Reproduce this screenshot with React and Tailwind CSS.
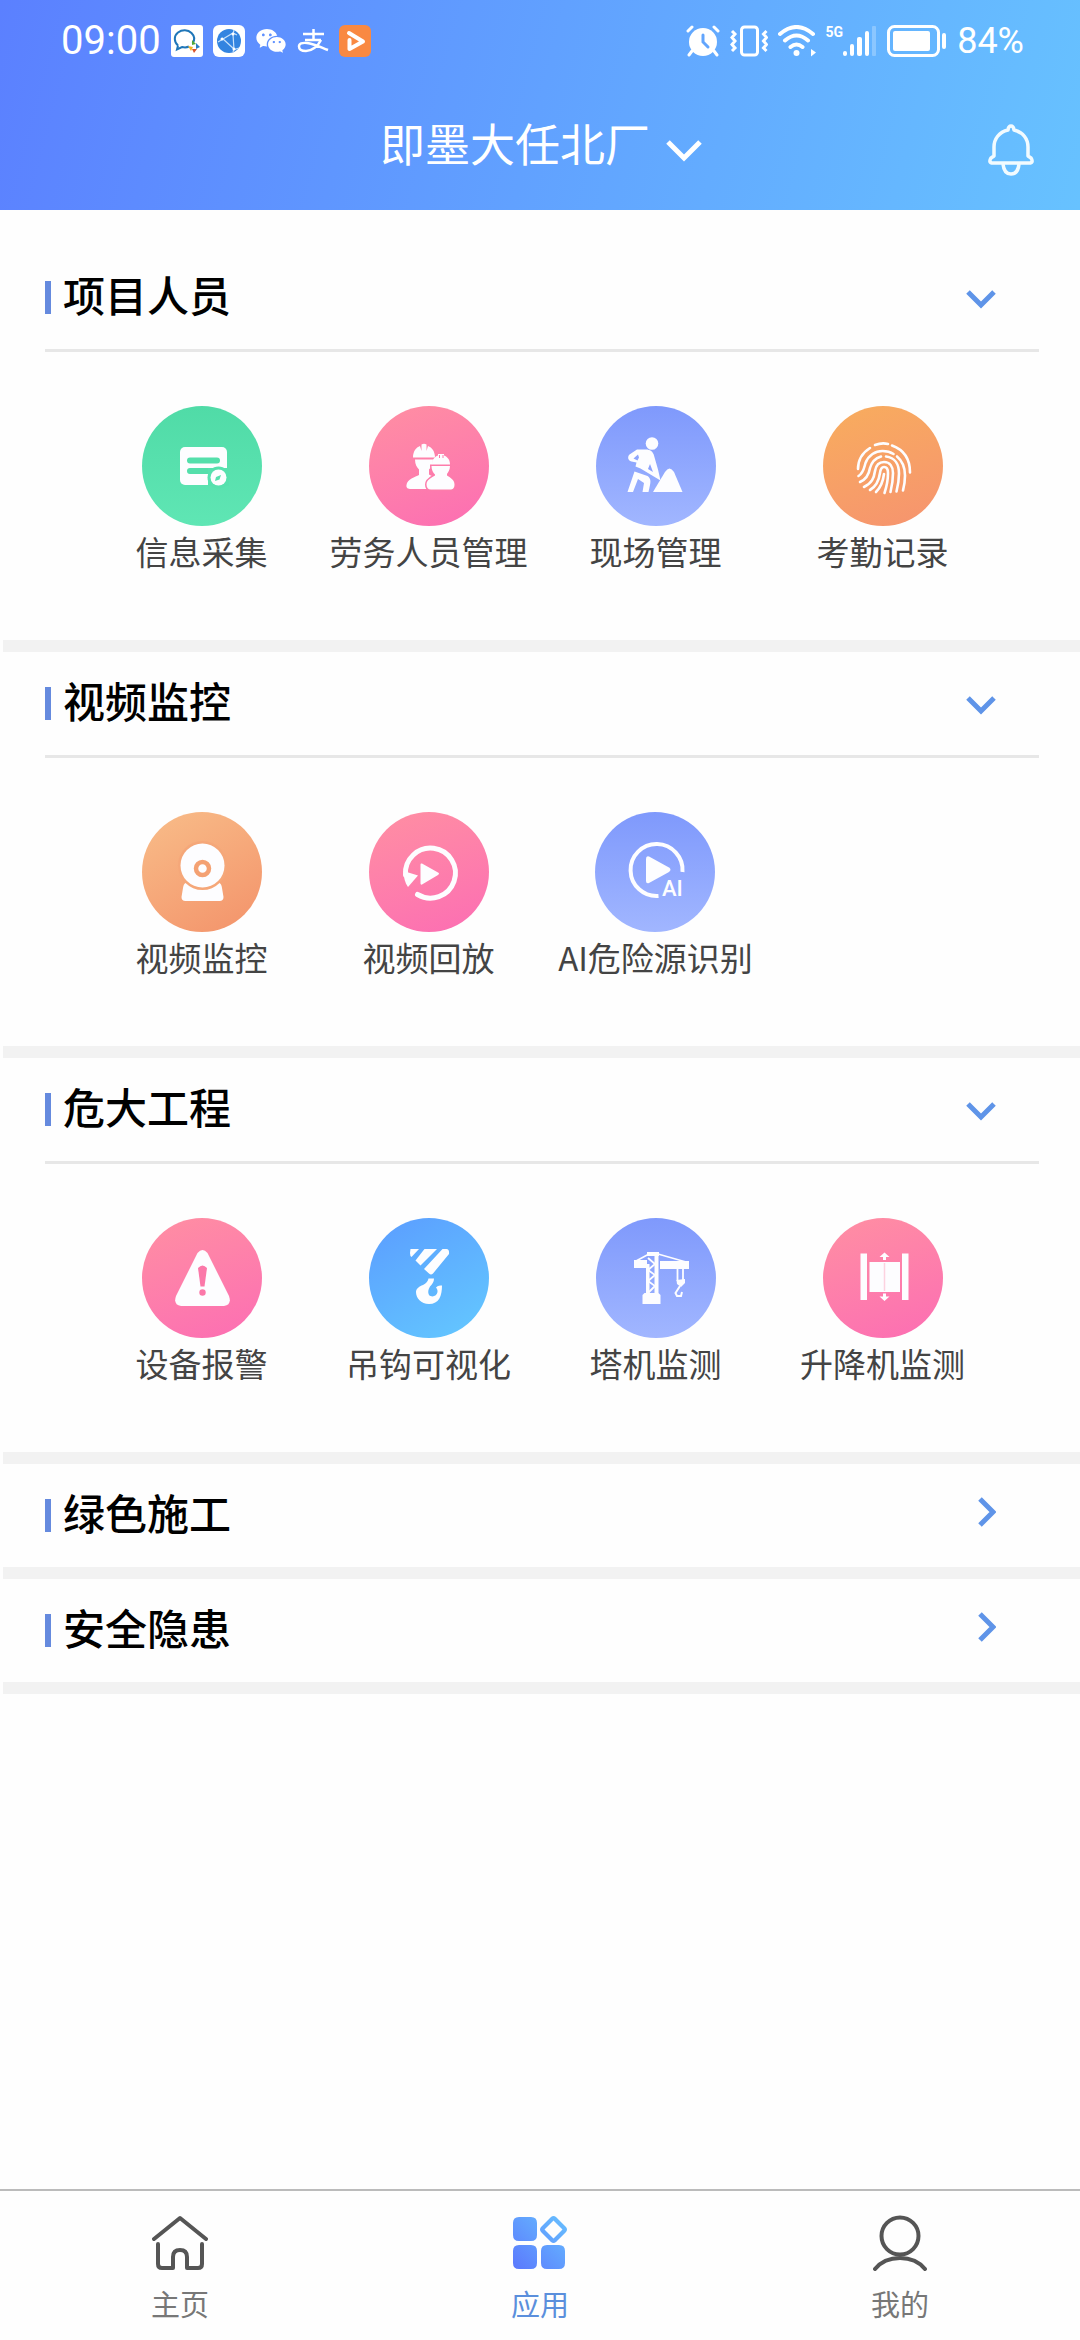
import { useState } from "react";
import { RiWechatFill } from "react-icons/ri";

const white = "#fdfdff";

function InfoIcon() {
  return (
    <svg viewBox="0 0 120 120" className="size-full" aria-hidden="true">
      <rect x="38" y="41" width="47" height="38" rx="5" fill={white} />
      <path d="M48 54.5h27M48 65h20" stroke="#54dfab" strokeWidth="6" strokeLinecap="round" />
      <path d="M66 62h19v-1l2 3v16H66z" fill="#57e1ae" />
      <path d="M66 62h12l7-3v3z" fill={white} />
      <circle cx="76.5" cy="71.5" r="11" fill="#57e1ae" />
      <circle cx="76.5" cy="71.5" r="8" fill={white} />
      <path d="M79 69l-1.5 4.500-4.500 1.500 1-4z" fill="#57e1ae" />
    </svg>
  );
}

function WorkersIcon() {
  return (
    <svg viewBox="0 0 120 120" className="size-full" aria-hidden="true" fill={white}>
      <path d="M44 51.500c0-6 3-10 7-11.500l1.500 5v-6.500q2.500-1.500 5 0V45l1.500-5c4 1.500 7 5.500 7 11.500z" />
      <path d="M46 53.500h18c0 5-2 8-4 10v5c3 2 8 3 8 6 0 5-8 8.500-8 8.500H42c-3 0-5-1-4.500-4 .5-6 9-8 12.500-10v-5.500c-2-2-4-5-4-10z" />
      <path
        d="M66 66h12v3.500c3 2 7.500 4 7.500 9 0 4-2 5-4 5H62c-3 0-4.500-2-4.500-5 0-5 5.500-7 8.500-9zM62.500 60h18.500c0 4-2 6.500-3.500 8.500H66c-2-2-3.500-4.500-3.500-8.500z"
        stroke="#fd7cab"
        strokeWidth="3"
      />
      <path d="M66 66h12v3.500c3 2 7.500 4 7.500 9 0 4-2 5-4 5H62c-3 0-4.500-2-4.500-5 0-5 5.500-7 8.500-9z" />
      <path d="M62.500 60h18.500c0 4-2 6.500-3.500 8.500H66c-2-2-3.500-4.500-3.500-8.500z" />
      <path d="M63 58.500c0-5 2.500-7.500 6-9v-1.500h6v1.500c3.500 1.500 6 4 6 9z" />
      <path d="M70.500 49v3M74 49v3" stroke="#fd7aab" />
    </svg>
  );
}

function DiggingIcon() {
  return (
    <svg viewBox="0 0 120 120" className="size-full" aria-hidden="true" fill={white}>
      <circle cx="56" cy="37.500" r="6.300" />
      <path
        fillRule="evenodd"
        d="M41 43.500h9c4 0 7 2 8 6l4 14 2.500 11-20-12-5-2 1-4-5-1c-4-1-4-5-2-7zM42 48.500l-4.500 4 4 2 1.500-3z"
      />
      <path d="M54 58l3 8-5-3z" fill="#8da2fd" />
      <path d="M38.500 65.500l13 4.500c3 2 3.500 5 2.500 9l-1.500 7h-6l1.500-9-6-4-5 13h-5.500z" />
      <path d="M57 86l12-20q4.500-7 9 0l8.500 20z" />
    </svg>
  );
}

function FingerprintIcon() {
  return (
    <svg
      viewBox="0 0 120 120"
      className="size-full"
      aria-hidden="true"
      fill="none"
      stroke={white}
      strokeWidth="2.600"
      strokeLinecap="round"
    >
      <path d="M35 63c0-9 4-16 12-21M52 39c4-1.500 9-2 13-1M69 39.500c11 4 18 13 18 27" />
      <path d="M35.500 70c5-3 5.500-8 7-13 3-8 10-12 17-12 5 0 8 1 11 3M74 50.500c6 5 8 12 8 19 0 5-1 11-2 15" />
      <path d="M37 76c7-3 9-8 10-14 2-7 6-10 11-11.500M63 50.500c9 1 13 8 13 17 0 7-1 12-2.500 18" />
      <path d="M41 81c8-4 10-9 11-16 1-6 4-9 9-9 6 0 9 5 9 11 0 7-1 13-2.500 19" />
      <path d="M47 84c7-4 9-10 10-17 .5-4 2-6 4-6 3 0 4 3 4 6 0 8-1.500 14-3.500 20" />
      <path d="M53 86c5-5 7-10 8-18" />
    </svg>
  );
}

function CameraIcon() {
  return (
    <svg viewBox="0 0 120 120" className="size-full" aria-hidden="true" fill={white}>
      <path d="M43.500 71h34q2 1 2.500 5l1.500 9q0 4-4 4h-34q-4 0-4-4l1.500-9q.5-4 2.500-5z" />
      <circle cx="60.500" cy="53.500" r="24.500" fill="#f5a779" />
      <circle cx="60.500" cy="53.500" r="22" />
      <circle cx="60.500" cy="56.500" r="6.500" fill="none" stroke="#f4a173" strokeWidth="4.500" />
    </svg>
  );
}

function ReplayIcon() {
  return (
    <svg viewBox="0 0 120 120" className="size-full" aria-hidden="true" fill={white}>
      <path
        d="M48.500 82.500A25 25 0 1 0 36.500 63"
        fill="none"
        stroke={white}
        strokeWidth="5"
        strokeLinecap="round"
      />
      <path d="M34.500 59l14.500 4.500L39 75c-3-4-4.500-10-4.500-16z" />
      <path d="M53 51.500l16 9q2 1 0 2.500l-16 9.500q-1.500.5-1.500-1v-19q0-1.500 1.500-1z" />
    </svg>
  );
}

function AiPlayIcon() {
  return (
    <svg viewBox="0 0 120 120" className="size-full" aria-hidden="true" fill={white}>
      <path d="M63.500 84A26 26 0 1 1 87.500 60" fill="none" stroke={white} strokeWidth="4" />
      <path d="M54 44.500l20 11q3 2 0 4.500l-20 11q-3 1-3-2v-22q0-3.500 3-2.500z" />
      <text
        x="67"
        y="84"
        className="font-[Roboto,sans-serif] text-[22px] font-medium"
      >
        AI
      </text>
    </svg>
  );
}

function WarningIcon() {
  return (
    <svg viewBox="0 0 120 120" className="size-full" aria-hidden="true" fill={white}>
      <path d="M55.500 35q5-6 10 0L87 78q3 9-5 10H39q-8-1-5-10z" />
      <path d="M56 50q4.500-5 9 0l-2.500 18.500h-4z" fill="#fb78a9" />
      <circle cx="60.500" cy="74.500" r="3.200" fill="#fb78a9" />
    </svg>
  );
}

function HookIcon() {
  return (
    <svg viewBox="0 0 120 120" className="size-full" aria-hidden="true" fill={white}>
      <path d="M41.500 31H50l-7.500 8q-1.500-1-1.500-4z" />
      <path d="M55.500 31H68L51.500 47.500l-5-5z" />
      <path d="M73.500 31h4q3 0 2.500 5L64 55.500q-2 2-4 0L55 51z" />
      <path d="M59.500 60.500H65q0 4-4 8-3 5-1 8.500c3 3 8 1 8.500-3 .3-2-.5-3-1.500-4.500 2-2 4-2 6-2C73 78 70 86 60 86c-8 0-13-6-13-12 0-3 3-5.500 7-7 3-1.500 5-3.500 5.500-6.500z" />
    </svg>
  );
}

function CraneIcon() {
  return (
    <svg viewBox="0 0 120 120" className="size-full" aria-hidden="true" fill={white}>
      <path d="M38 42h13v8H38zM64 43h29v8H64z" />
      <path d="M51 34h12v4H51zM50 46h3.500v30H50zM58.500 36h4v40h-4zM46.500 77l2-2h14l2 2v9h-18z" />
      <path d="M40 43l13-7M62 36l28 8" fill="none" stroke={white} strokeWidth="1.500" />
      <path
        d="M52 40l7 6-7 6 7 5-7 6 7 5-7 7M81.500 50v13M87 50v12"
        fill="none"
        stroke={white}
        strokeWidth="1.800"
      />
      <path d="M80.500 62l8.500-1v4l-4 4-4-3z" />
      <path d="M84 68l-4.500 7 1.500 3h4l1-4" fill="none" stroke={white} strokeWidth="2" />
    </svg>
  );
}

function ElevatorIcon() {
  return (
    <svg viewBox="0 0 120 120" className="size-full" aria-hidden="true" fill={white}>
      <path d="M37.500 35.500H44V82h-6.500zM79 35.500h6.500V82H79zM46.500 44H77v30H46.500z" />
      <path d="M61.500 45v28" stroke="#fdd3e0" strokeWidth="1.500" />
      <path d="M61.500 34.500l5 4.500h-3.500v3h-3v-3h-3.500zM61.500 83l5-4.500h-3.500v-3h-3v3h-3.500z" />
    </svg>
  );
}

const pink = "bg-linear-160 from-[#ff8fa2] to-[#fc6db3]";
const violet = "bg-linear-180 from-[#7f99fc] to-[#a1b6ff]";

const sections = [
  {
    title: "项目人员",
    items: [
      { label: "信息采集", Icon: InfoIcon, bg: "bg-linear-180 from-[#50dba7] to-[#5fe6b4]" },
      { label: "劳务人员管理", Icon: WorkersIcon, bg: pink },
      { label: "现场管理", Icon: DiggingIcon, bg: violet },
      { label: "考勤记录", Icon: FingerprintIcon, bg: "bg-linear-160 from-[#f8ad5d] to-[#f6936f]" },
    ],
  },
  {
    title: "视频监控",
    items: [
      { label: "视频监控", Icon: CameraIcon, bg: "bg-linear-150 from-[#f8bd89] to-[#f3926a]" },
      { label: "视频回放", Icon: ReplayIcon, bg: pink },
      { label: "AI危险源识别", Icon: AiPlayIcon, bg: violet },
    ],
  },
  {
    title: "危大工程",
    items: [
      { label: "设备报警", Icon: WarningIcon, bg: pink },
      { label: "吊钩可视化", Icon: HookIcon, bg: "bg-linear-150 from-[#5b9cff] to-[#64c9ff]" },
      { label: "塔机监测", Icon: CraneIcon, bg: violet },
      { label: "升降机监测", Icon: ElevatorIcon, bg: pink },
    ],
  },
  { title: "绿色施工", items: [] },
  { title: "安全隐患", items: [] },
];

function StatusBar() {
  return (
    <div className="flex h-[82px] items-center justify-between pr-14 pl-[61px] font-[Roboto,sans-serif] text-white">
      <div className="flex items-center gap-[10px]">
        <span className="text-[40px] leading-10">09:00</span>
        <svg viewBox="0 0 32 32" className="size-8">
          <rect width="32" height="32" rx="3" fill="#fff" />
          <path
            d="M7 20.500C3 17 2.500 11 7 7.500c4-3 10-3 13.500.5 3 3 3.500 7 1 10.500M7 20.500L6 24.500l5-2.500c3 .8 5 .5 7-.5"
            fill="none"
            stroke="#1f76b8"
            strokeWidth="2"
          />
          <path d="M21 15l4 4-4 1z" fill="#4fa83d" />
          <path d="M25 18l4 4-4 2z" fill="#2b7cc4" />
          <path d="M21 24l5 0-3 4z" fill="#d9542b" />
          <path d="M17 21l5 1-2 4z" fill="#f0b429" />
        </svg>
        <svg viewBox="0 0 32 32" className="size-8">
          <rect width="32" height="32" rx="6" fill="#fff" />
          <circle cx="16" cy="16" r="12" fill="#3384e0" />
          <path d="M5 17L20 8l4 2M9 13l12 11-1 3M21 5l-1 4 1 16M20 25l6-2" fill="none" stroke="#c5e0fb" strokeWidth="1.200" />
          <circle cx="20" cy="9" r="1.500" fill="#fff" />
          <circle cx="21" cy="24" r="1.500" fill="#fff" />
          <circle cx="9" cy="14" r="1.500" fill="#fff" />
        </svg>
        <RiWechatFill className="size-8" />
        <svg viewBox="0 0 32 32" className="size-8" fill="none" stroke="#fff" strokeWidth="2.500">
          <path d="M6 9h21M16.500 4v11M8 15h16" />
          <path d="M24 15c-3 6-9 11-15 11-4 0-7-1.500-7-4.500s3-4 8-3.500c7 .8 13 4 21 7" />
        </svg>
        <svg viewBox="0 0 32 32" className="size-8">
          <rect width="32" height="32" rx="6" fill="#f98942" />
          <path d="M10 8l14 8.500L10.500 24v-9" fill="none" stroke="#fff" strokeWidth="4" strokeLinejoin="round" strokeLinecap="round" />
        </svg>
      </div>

      <div className="flex items-center gap-[10px]">
        <svg viewBox="0 0 34 32" className="h-8 w-[34px]" fill="none" stroke="#fff" strokeWidth="3" strokeLinecap="round">
          <circle cx="17" cy="17" r="14" fill="#fff" stroke="none" />
          <path d="M17 10v7l5 5" stroke="#62a5fd" strokeWidth="3" />
          <path d="M2 6l4-4M32 6l-4-4M6 26l-3 4M28 26l3 4" />
        </svg>
        <svg viewBox="0 0 38 32" className="h-8 w-[38px]" fill="none" stroke="#fff" strokeWidth="3">
          <rect x="11.500" y="2" width="16" height="28" rx="3" />
          <path d="M2 6l3 3-3 3.500 3 3.500-3 3.500 3 3.500-3 3M36.500 6l-3 3 3 3.500-3 3.500 3 3.500-3 3.500 3 3" />
        </svg>
        <svg viewBox="0 0 38 32" className="h-8 w-[38px]" fill="none" stroke="#fff" strokeWidth="4" strokeLinecap="round">
          <path d="M2 9q16.500-14 33 0M7 15.500q11.500-10 23 0M12.500 22q6-5 12 0" />
          <circle cx="18.500" cy="28" r="3" fill="#fff" stroke="none" />
          <path d="M33 24l5 3.500-5 4z" fill="#fff" stroke="none" />
        </svg>
        <div className="flex items-start">
          <span className="text-[14px] leading-[14px] font-bold">5G</span>
          <svg viewBox="0 0 34 32" className="h-8 w-[34px]" fill="#fff">
            <rect x="0" y="26" width="4" height="5" rx="2" />
            <rect x="7" y="19" width="4" height="12" rx="2" />
            <rect x="14" y="12" width="5" height="19" rx="2" />
            <rect x="22" y="6" width="4" height="25" rx="2" />
            <rect x="29" y="1" width="4" height="30" rx="1" opacity=".25" />
          </svg>
        </div>
        <svg viewBox="0 0 60 32" className="h-8 w-[60px]">
          <rect x="1.500" y="1.500" width="50" height="29" rx="6" fill="none" stroke="#fff" strokeWidth="3" />
          <rect x="6" y="6" width="37" height="20" rx="2" fill="#fff" />
          <rect x="55" y="8" width="4" height="16" rx="2" fill="#fff" />
        </svg>
        <span className="text-[36px] leading-10">84%</span>
      </div>
    </div>
  );
}

function Section({ title, items }) {
  const [open, setOpen] = useState(items.length > 0);

  return (
    <section>
      <h2>
        <button
          type="button"
          aria-expanded={open}
          onClick={() => setOpen(!open)}
          className="flex h-[103px] w-full items-center pr-[84px] pl-[45px]"
        >
          <span className="h-[33px] w-[6px] bg-[#658ade]" />
          <span className="ml-3 pb-2 text-[42px] leading-[60px] font-medium text-black">{title}</span>
          <svg viewBox="0 0 30 40" className="ml-auto h-10 w-[30px]" fill="none" stroke="#5f94e8" strokeWidth="5">
            {open ? <path d="M2 14l13 13 13-13" /> : <path d="M14 3l13 13-13 13" />}
          </svg>
        </button>
      </h2>
      {open && (
        <>
          <hr className="mr-[41px] ml-[45px] border-t-[3px] border-[#e7e7e7]" />
          <ul className="grid grid-cols-4 pt-[54px] pr-[84px] pb-[62px] pl-[88px]">
            {items.map(({ label, Icon, bg }) => (
              <li key={label} className="flex justify-center">
                <button type="button" className="flex flex-col items-center">
                  <span className={`size-[120px] rounded-full ${bg}`}>
                    <Icon />
                  </span>
                  <span className="text-[33px] leading-[50px] whitespace-nowrap text-[#444]">{label}</span>
                  <span className="h-[2px]" />
                </button>
              </li>
            ))}
          </ul>
        </>
      )}
      <div className="ml-[3px] h-3 bg-[#f2f2f2]" />
    </section>
  );
}

const tabs = [
  {
    label: "主页",
    icon: (
      <svg viewBox="0 0 56 56" className="size-14" fill="none" stroke="#555" strokeWidth="4" strokeLinecap="round" strokeLinejoin="round">
        <path d="M2 24L28 3l26 21M6 29v20q0 4 4 4h11V42q0-7 7-7t7 7v11h11q4 0 4-4V29" />
      </svg>
    ),
  },
  {
    label: "应用",
    icon: (
      <svg viewBox="0 0 56 56" className="size-14">
        <defs>
          <linearGradient id="tiles" x1="0" y1="1" x2="1" y2="0">
            <stop offset="0" stopColor="#5b78fd" />
            <stop offset="1" stopColor="#67c1ff" />
          </linearGradient>
        </defs>
        <path
          fill="url(#tiles)"
          fillRule="evenodd"
          d="M7 2h12q6 0 6 6v12q0 6-6 6H7q-6 0-6-6V8q0-6 6-6zM7 30h12q6 0 6 6v12q0 6-6 6H7q-6 0-6-6V36q0-6 6-6zM35 30h12q6 0 6 6v12q0 6-6 6H35q-6 0-6-6V36q0-6 6-6zM39 2q2.500-2 5 0l10 10q2 2.500 0 5L44 27q-2.500 2-5 0L29 17q-2-2.500 0-5zM41.500 5.500L32.500 14.500l9 9 9-9z"
        />
      </svg>
    ),
  },
  {
    label: "我的",
    icon: (
      <svg viewBox="0 0 56 56" className="size-14" fill="none" stroke="#555" strokeWidth="4" strokeLinecap="round">
        <circle cx="28" cy="21" r="18.500" />
        <path d="M3 54q9-11 25-11t25 11" />
      </svg>
    ),
  },
];

function App() {
  const [active, setActive] = useState("应用");

  return (
    <div className="flex min-h-screen flex-col bg-[#fefefe] font-['Noto_Sans_CJK_SC',sans-serif]">
      <header className="h-[210px] bg-linear-[105deg] from-[#5b80ff] to-[#67c2ff] text-white">
        <StatusBar />
        <div className="grid grid-cols-[1fr_auto_1fr] items-end pt-7 pr-[46px] pl-12">
          <button type="button" className="col-start-2 flex items-end gap-4">
            <span className="text-[45px] leading-[66px]">即墨大任北厂</span>
            <svg viewBox="0 0 36 40" className="h-10 w-9" fill="none" stroke="#fff" strokeWidth="5">
              <path d="M2 6l16 16L34 6" />
            </svg>
          </button>
          <button type="button" aria-label="通知" className="justify-self-end">
            <svg viewBox="0 0 46 52" className="h-[52px] w-[46px]" fill="none" stroke="#f2fbff" strokeWidth="3.500" strokeLinejoin="round">
              <path d="M23 2q2.500 0 3 4c9 2 14 9 14 17v9l3 2q3 5-2 5H5q-5 0-2-5l3-2v-9C6 15 11 8 20 6q.5-4 3-4z" />
              <path d="M15 40q1 10 8 10t8-10" />
            </svg>
          </button>
        </div>
      </header>

      <main className="pt-9">
        {sections.map((s) => (
          <Section key={s.title} title={s.title} items={s.items} />
        ))}
      </main>

      <nav className="mt-auto grid h-[151px] grid-cols-3 border-t-2 border-[#bbb]">
        {tabs.map((tab) => (
          <button
            key={tab.label}
            type="button"
            onClick={() => setActive(tab.label)}
            className="flex flex-col items-center pt-6"
          >
            {tab.icon}
            <span
              className={`pt-3 text-[29px] leading-10 ${active === tab.label ? "text-[#5b8fdc]" : "text-[#777]"}`}
            >
              {tab.label}
            </span>
          </button>
        ))}
      </nav>
    </div>
  );
}

export default App;
